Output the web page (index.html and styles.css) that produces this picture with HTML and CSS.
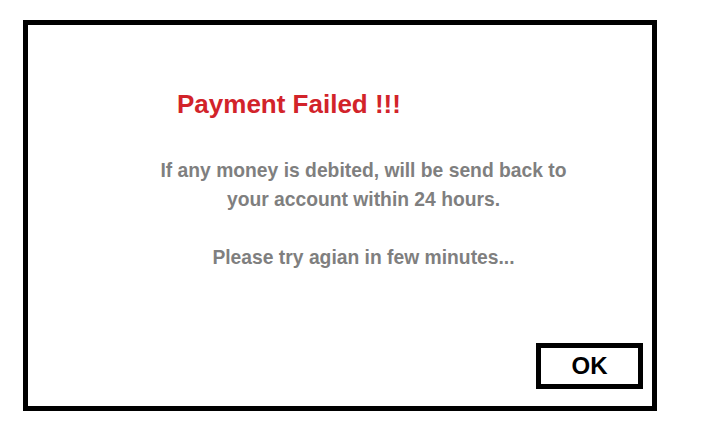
FILE: index.html
```html
<!DOCTYPE html>
<html lang="en">
<head>
<meta charset="utf-8">
<title>Payment Failed</title>
<link rel="stylesheet" href="styles.css">
</head>
<body>
  <div class="dialog">
    <h1 class="title">Payment Failed !!!</h1>
    <div class="message">
      <p class="line-group">If any money is debited, will be send back to<br>your account within 24 hours.</p>
      <p class="line-group">Please try agian in few minutes...</p>
    </div>
    <button class="ok-btn" type="button">OK</button>
  </div>
</body>
</html>
```
FILE: styles.css
```css
html, body {
  margin: 0;
  padding: 0;
  background: #ffffff;
}

body {
  font-family: "Liberation Sans", Arial, sans-serif;
  padding: 20px 0 0 23px;
}

.dialog {
  box-sizing: border-box;
  width: 634px;
  height: 391px;
  border: 5px solid #000000;
  background: #ffffff;
  display: flex;
  flex-direction: column;
  padding: 64px 9px 17px 0;
}

.title {
  margin: 0 0 0 149px;
  font-size: 26px;
  line-height: 30px;
  font-weight: bold;
  color: #d2232a;
}

.message {
  margin-top: 37px;
  padding-left: 56px;
  text-align: center;
  color: #7f7f7f;
  font-weight: bold;
  font-size: 19.3px;
  line-height: 29px;
}

.line-group {
  margin: 0 0 29px 0;
}

.ok-btn {
  margin-top: auto;
  align-self: flex-end;
  box-sizing: border-box;
  width: 107px;
  height: 46px;
  border: 5px solid #000000;
  background: #ffffff;
  padding: 0;
  font-family: "Liberation Sans", Arial, sans-serif;
  font-size: 24px;
  font-weight: bold;
  color: #000000;
  line-height: 1;
}
```
